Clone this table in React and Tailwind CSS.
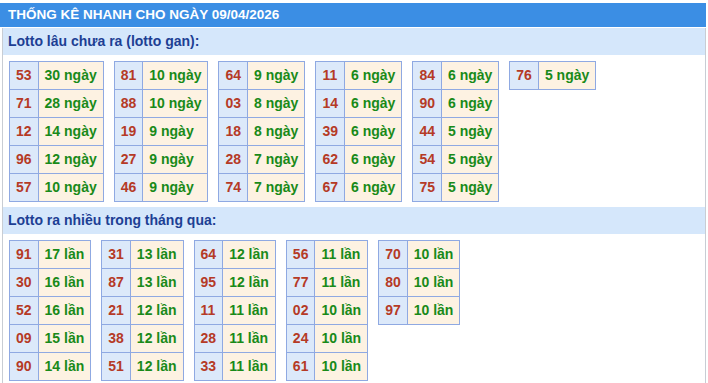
import React from "react";

const gan = [
  [["53", 30], ["71", 28], ["12", 14], ["96", 12], ["57", 10]],
  [["81", 10], ["88", 10], ["19", 9], ["27", 9], ["46", 9]],
  [["64", 9], ["03", 8], ["18", 8], ["28", 7], ["74", 7]],
  [["11", 6], ["14", 6], ["39", 6], ["62", 6], ["67", 6]],
  [["84", 6], ["90", 6], ["44", 5], ["54", 5], ["75", 5]],
  [["76", 5]],
];

const nhieu = [
  [["91", 17], ["30", 16], ["52", 16], ["09", 15], ["90", 14]],
  [["31", 13], ["87", 13], ["21", 12], ["38", 12], ["51", 12]],
  [["64", 12], ["95", 12], ["11", 11], ["28", 11], ["33", 11]],
  [["56", 11], ["77", 11], ["02", 10], ["24", 10], ["61", 10]],
  [["70", 10], ["80", 10], ["97", 10]],
];

function LotoTable({ rows, unit }) {
  return (
    <table className="border-collapse border border-[#8fa9e2]">
      <tbody>
        {rows.map((r, i) => (
          <tr key={i} className="h-[28px]">
            <td className="border border-[#8fa9e2] bg-[#dce9fa] px-[6px] text-[#b53a26]">
              {r[0]}
            </td>
            <td className="border border-[#8fa9e2] bg-[#fdf2e2] px-[6px] text-[#198a19]">
              {r[1]} {unit}
            </td>
          </tr>
        ))}
      </tbody>
    </table>
  );
}

function Section({ title, data, unit }) {
  return (
    <>
      <div className="mt-[1px] flex h-[27px] items-center bg-[#d5e7fb] pl-[5px] text-[14px] font-bold text-[#1d3f94]">
        {title}
      </div>
      <div className="flex flex-wrap items-start gap-x-[10px] pt-[6px] pb-[5px] pl-[6px] text-[14px] font-bold">
        {data.map((rows, i) => (
          <LotoTable key={i} rows={rows} unit={unit} />
        ))}
      </div>
    </>
  );
}

export default function App() {
  return (
    <div className="w-[706px] bg-white pt-[3px] font-['Liberation_Sans',Arial,sans-serif]">
      <div className="flex h-[24px] items-center bg-[#3b8ee4] pl-[8px] text-[13.5px] font-bold text-white">
        THỐNG KÊ NHANH CHO NGÀY 09/04/2026
      </div>
      <div className="ml-[2px] border-x border-[#c8cdd4]">
        <Section title="Lotto lâu chưa ra (lotto gan):" data={gan} unit="ngày" />
        <div className="-mt-[1px]">
          <Section title="Lotto ra nhiều trong tháng qua:" data={nhieu} unit="lần" />
        </div>
      </div>
    </div>
  );
}
